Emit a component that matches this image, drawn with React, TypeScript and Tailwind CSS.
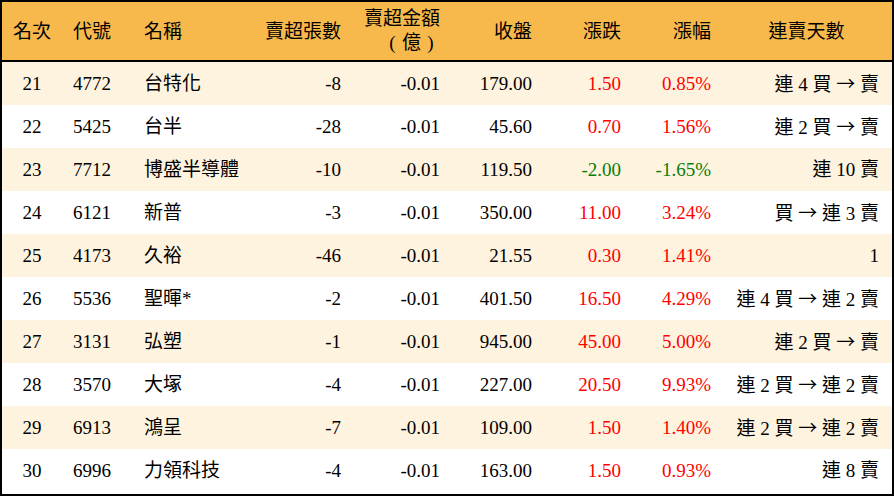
import React from "react";

type Row = {
    rank: number;
    code: string;
    name: string;
    lots: string;
    amount: string;
    close: string;
    change: string;
    pct: string;
    streak: string;
};

const rows: Row[] = [
    { rank: 21, code: "4772", name: "台特化", lots: "-8", amount: "-0.01", close: "179.00", change: "1.50", pct: "0.85%", streak: "連 4 買 → 賣" },
    { rank: 22, code: "5425", name: "台半", lots: "-28", amount: "-0.01", close: "45.60", change: "0.70", pct: "1.56%", streak: "連 2 買 → 賣" },
    { rank: 23, code: "7712", name: "博盛半導體", lots: "-10", amount: "-0.01", close: "119.50", change: "-2.00", pct: "-1.65%", streak: "連 10 賣" },
    { rank: 24, code: "6121", name: "新普", lots: "-3", amount: "-0.01", close: "350.00", change: "11.00", pct: "3.24%", streak: "買 → 連 3 賣" },
    { rank: 25, code: "4173", name: "久裕", lots: "-46", amount: "-0.01", close: "21.55", change: "0.30", pct: "1.41%", streak: "1" },
    { rank: 26, code: "5536", name: "聖暉*", lots: "-2", amount: "-0.01", close: "401.50", change: "16.50", pct: "4.29%", streak: "連 4 買 → 連 2 賣" },
    { rank: 27, code: "3131", name: "弘塑", lots: "-1", amount: "-0.01", close: "945.00", change: "45.00", pct: "5.00%", streak: "連 2 買 → 賣" },
    { rank: 28, code: "3570", name: "大塚", lots: "-4", amount: "-0.01", close: "227.00", change: "20.50", pct: "9.93%", streak: "連 2 買 → 連 2 賣" },
    { rank: 29, code: "6913", name: "鴻呈", lots: "-7", amount: "-0.01", close: "109.00", change: "1.50", pct: "1.40%", streak: "連 2 買 → 連 2 賣" },
    { rank: 30, code: "6996", name: "力領科技", lots: "-4", amount: "-0.01", close: "163.00", change: "1.50", pct: "0.93%", streak: "連 8 賣" },
];

const cols = "grid grid-cols-[60px_60px_128px_101px_99px_92px_89px_90px_171px]";

// the arrow is drawn from the CJK font so it gets its full width
function Streak({ text }: { text: string }) {
    const parts = text.split("→");
    return (
        <>
            {parts.map((p, i) => (
                <React.Fragment key={i}>
                    {i > 0 && <span style={{ fontFamily: '"Noto Sans CJK TC", sans-serif' }}>→</span>}
                    {p}
                </React.Fragment>
            ))}
        </>
    );
}

export default function App() {
    return (
        <main
            className="w-[894px] h-[496px] border-2 border-black bg-white text-black text-[19px] leading-none"
            style={{ fontFamily: '"Liberation Serif", "Noto Sans CJK TC", serif' }}
        >
            <div className={`${cols} h-[60px] items-center bg-[#f8b94c] border-b-2 border-black`}>
                <div className="text-center">名次</div>
                <div className="text-center">代號</div>
                <div className="pl-[22px]">名稱</div>
                <div className="text-right pr-[10px]">賣超張數</div>
                <div className="flex flex-col items-end pr-[10px] leading-[24px]">
                    <div>賣超金額</div>
                    <div className="flex">
                        <span className="w-[19px] text-center">(</span>
                        <span className="w-[19px] text-center">億</span>
                        <span className="w-[19px] text-center">)</span>
                    </div>
                </div>
                <div className="text-right pr-[10px]">收盤</div>
                <div className="text-right pr-[10px]">漲跌</div>
                <div className="text-right pr-[10px]">漲幅</div>
                <div className="text-center">連賣天數</div>
            </div>
            {rows.map((r, i) => {
                const tone = r.change.startsWith("-") ? "text-[#0a7d0a]" : "text-[#ff0000]";
                return (
                    <div key={r.rank} className={`${cols} h-[43px] items-center ${i % 2 === 0 ? "bg-[#fef3df]" : "bg-white"}`}>
                        <div className="text-center">{r.rank}</div>
                        <div className="text-center">{r.code}</div>
                        <div className="pl-[22px]">{r.name}</div>
                        <div className="text-right pr-[10px]">{r.lots}</div>
                        <div className="text-right pr-[10px]">{r.amount}</div>
                        <div className="text-right pr-[10px]">{r.close}</div>
                        <div className={`text-right pr-[10px] ${tone}`}>{r.change}</div>
                        <div className={`text-right pr-[10px] ${tone}`}>{r.pct}</div>
                        <div className="text-right pr-[13px] whitespace-pre">
                            <Streak text={r.streak} />
                        </div>
                    </div>
                );
            })}
        </main>
    );
}
